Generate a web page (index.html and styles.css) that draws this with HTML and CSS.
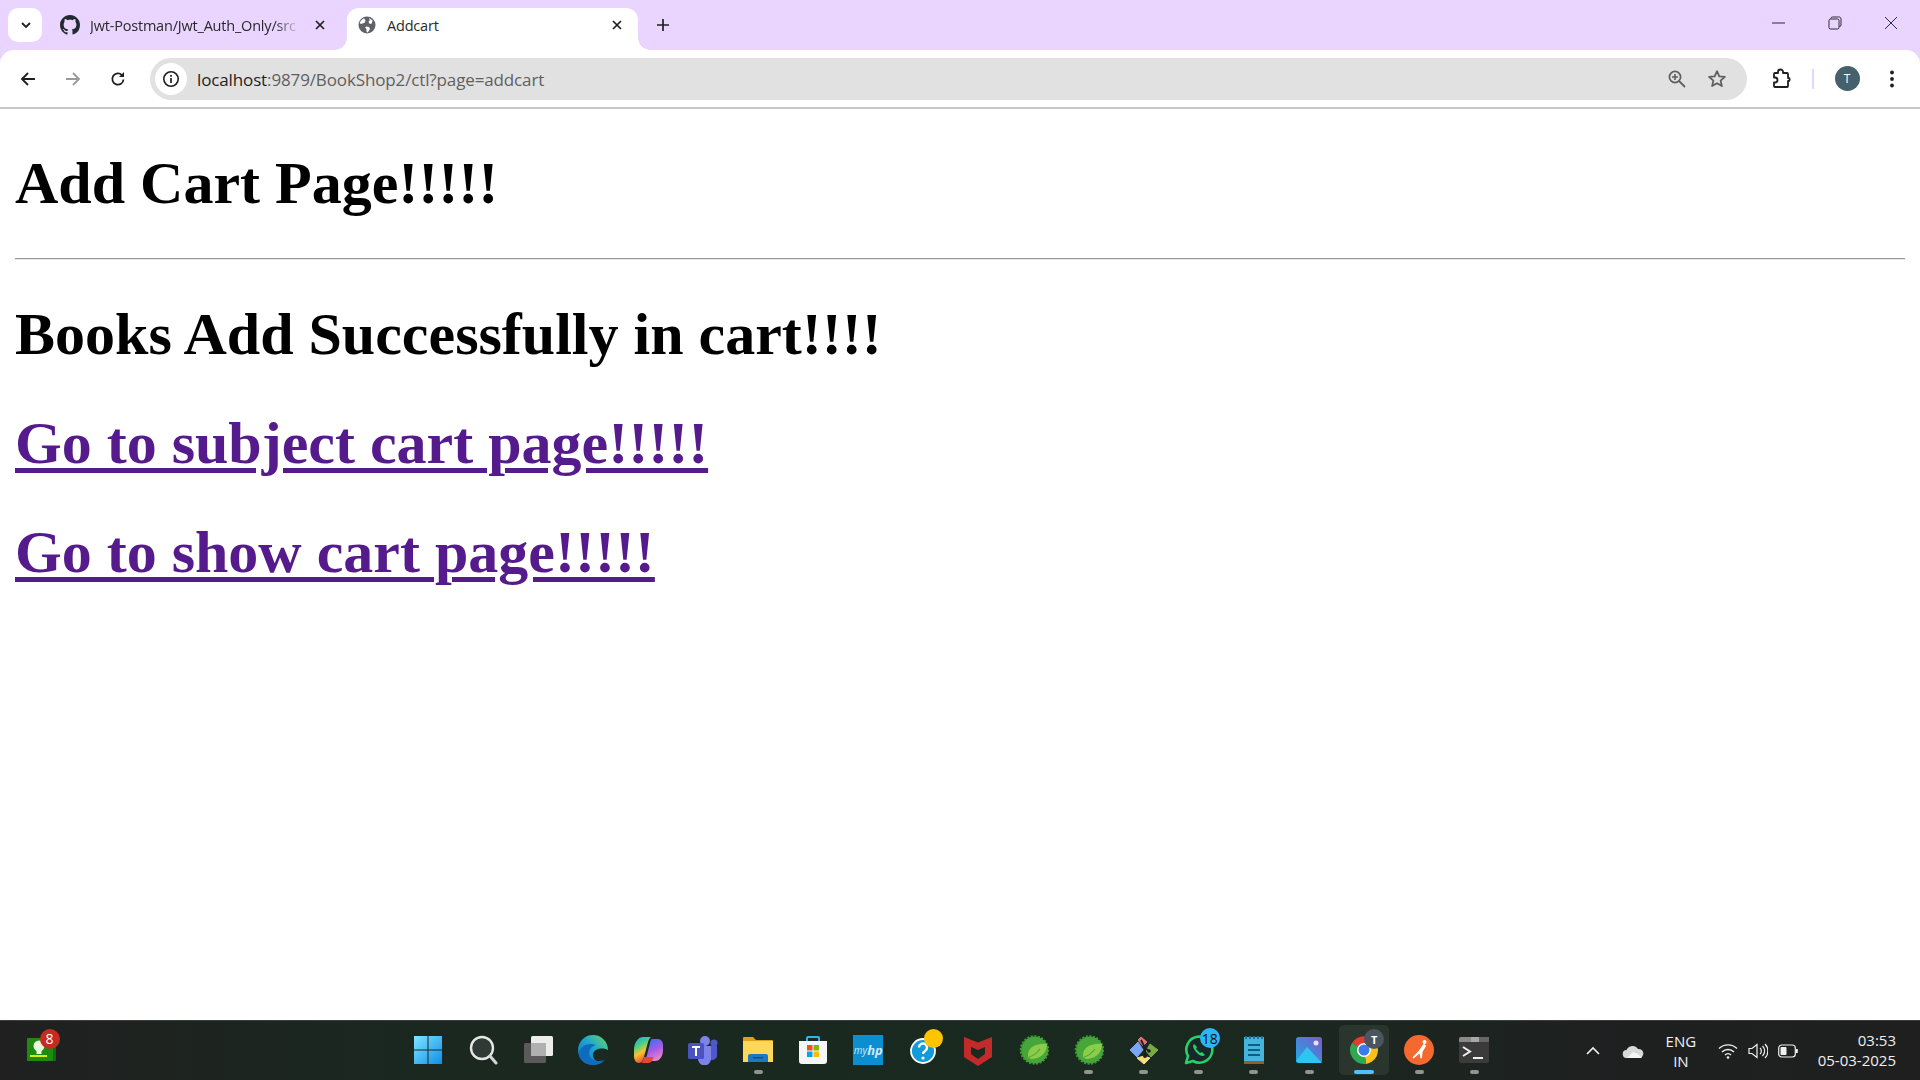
FILE: index.html
```html
<!DOCTYPE html>
<html lang="en">
<head>
<meta charset="utf-8">
<title>Addcart</title>
<link rel="stylesheet" href="styles.css">
</head>
<body>
<div class="screen">
  <header class="tabstrip">
    <button class="tabsearch"><svg width="14" height="14" viewBox="0 0 14 14"><path d="M3 5l4 4 4-4" fill="none" stroke="#1f1f1f" stroke-width="1.8"/></svg></button>
    <div class="tab inactive">
      <svg class="favicon" width="20" height="20" viewBox="0 0 16 16"><path fill="#24292f" d="M8 0C3.58 0 0 3.58 0 8c0 3.54 2.29 6.53 5.47 7.59.4.07.55-.17.55-.38 0-.19-.01-.82-.01-1.49-2.01.37-2.53-.49-2.69-.94-.09-.23-.48-.94-.82-1.13-.28-.15-.68-.52-.01-.53.63-.01 1.08.58 1.23.82.72 1.21 1.87.87 2.33.66.07-.52.28-.87.51-1.07-1.78-.2-3.64-.89-3.64-3.95 0-.87.31-1.59.82-2.15-.08-.2-.36-1.02.08-2.12 0 0 .67-.21 2.2.82.64-.18 1.32-.27 2-.27s1.36.09 2 .27c1.53-1.04 2.2-.82 2.2-.82.44 1.1.16 1.92.08 2.12.51.56.82 1.27.82 2.15 0 3.07-1.87 3.75-3.65 3.95.29.25.54.73.54 1.48 0 1.07-.01 1.93-.01 2.2 0 .21.15.46.55.38A8.01 8.01 0 0 0 16 8c0-4.42-3.58-8-8-8z"/></svg>
      <span class="tabtitle fade">Jwt-Postman/Jwt_Auth_Only/src</span>
      <svg class="tabclose" width="12" height="12" viewBox="0 0 12 12"><path d="M2 2l8 8M10 2l-8 8" stroke="#1f1f1f" stroke-width="1.7"/></svg>
    </div>
    <div class="tab active">
      <svg class="favicon" width="18" height="18" viewBox="0 0 18 18"><circle cx="9" cy="9" r="8.5" fill="#5f6368"/><path fill="#fff" d="M6 2.2l1.6 2.3-1 2.2L3 8 1.6 7a7.6 7.6 0 0 1 4.4-4.8zM8 10.5l3 .6 1 2-2.2 3.4-1.2-.6-.2-3-1.2-1.2zM11 2l3.6 2.5-.8 3-2 .4-1.4-2.2 1.4-1.2z"/></svg>
      <span class="tabtitle">Addcart</span>
      <svg class="tabclose" width="12" height="12" viewBox="0 0 12 12"><path d="M2 2l8 8M10 2l-8 8" stroke="#1f1f1f" stroke-width="1.7"/></svg>
    </div>
    <button class="newtab"><svg width="14" height="14" viewBox="0 0 14 14"><path d="M7 1v12M1 7h12" stroke="#1f1f1f" stroke-width="1.7"/></svg></button>
    <div class="winctl">
      <svg width="14" height="14" viewBox="0 0 14 14"><path d="M0 7h13" stroke="#2b2b33" stroke-width="1"/></svg>
      <svg width="14" height="14" viewBox="0 0 14 14"><path d="M3 2.500a1.500 1.500 0 0 1 1.500-1.500h6A2 2 0 0 1 13 3v6a1.500 1.500 0 0 1-1.500 1.500" fill="none" stroke="#2b2b33"/><rect x="1" y="3" width="10" height="10" rx="1.500" fill="none" stroke="#2b2b33"/></svg>
      <svg width="14" height="14" viewBox="0 0 14 14"><path d="M1 1l12 12M13 1L1 13" stroke="#2b2b33" stroke-width="1"/></svg>
    </div>
  </header>
  <nav class="toolbar">
    <svg class="navicon first" width="18" height="18" viewBox="0 0 18 18"><path d="M16 9H3M9 3L3 9l6 6" fill="none" stroke="#1f1f1f" stroke-width="1.8"/></svg>
    <svg class="navicon" width="18" height="18" viewBox="0 0 18 18"><path d="M2 9h13M9 3l6 6-6 6" fill="none" stroke="#9a9a9a" stroke-width="1.8"/></svg>
    <svg class="navicon" width="18" height="18" viewBox="0 0 18 18"><path d="M14.500 9.500a5.600 5.600 0 1 1-1.600-4.400" fill="none" stroke="#1f1f1f" stroke-width="1.8"/><path d="M15 2v5h-5z" fill="#1f1f1f"/></svg>
    <div class="omnibox">
      <span class="siteinfo"><svg width="18" height="18" viewBox="0 0 18 18"><circle cx="9" cy="9" r="7.200" fill="none" stroke="#1f1f1f" stroke-width="1.6"/><path d="M9 8v5M9 5v1.800" stroke="#1f1f1f" stroke-width="1.7"/></svg></span>
      <span class="url"><span class="host">localhost</span>:9879/BookShop2/ctl?page=addcart</span>
      <svg class="zoomglass" width="20" height="20" viewBox="0 0 20 20"><circle cx="8" cy="8" r="5.600" fill="none" stroke="#5f5f5f" stroke-width="1.7"/><path d="M12 12l6 6" stroke="#5f5f5f" stroke-width="1.8"/><path d="M8 5v6M5 8h6" stroke="#5f5f5f" stroke-width="1.6"/></svg>
      <svg class="star" width="20" height="20" viewBox="0 0 20 20"><path d="M10 2.200l2.300 5.200 5.600.5-4.300 3.700 1.300 5.500L10 14.200l-4.900 2.900 1.300-5.500-4.300-3.700 5.600-.5z" fill="none" stroke="#5f5f5f" stroke-width="1.8" stroke-linejoin="round"/></svg>
    </div>
    <svg class="ext" width="22" height="22" viewBox="0 0 22 22"><path d="M8 5V4a2.500 2.500 0 0 1 5 0v1h4a1 1 0 0 1 1 1v4h1a2 2 0 0 1 0 3h-1v5a1 1 0 0 1-1 1H5a1 1 0 0 1-1-1v-3.500h1a2.500 2.500 0 0 0 0-5H4V6a1 1 0 0 1 1-1z" fill="none" stroke="#1f1f1f" stroke-width="1.8" stroke-linejoin="round"/></svg>
    <span class="sep"></span>
    <span class="avatar">T</span>
    <svg class="menu" width="6" height="20" viewBox="0 0 6 20"><circle cx="3" cy="3.500" r="1.900" fill="#1f1f1f"/><circle cx="3" cy="10" r="1.900" fill="#1f1f1f"/><circle cx="3" cy="16.500" r="1.900" fill="#1f1f1f"/></svg>
  </nav>
  <main class="page">
    <h1>Add Cart Page!!!!!</h1>
    <hr>
    <h1>Books Add Successfully in cart!!!!</h1>
    <h1><a href="#">Go to subject cart page!!!!!</a></h1>
    <h1><a href="#">Go to show cart page!!!!!</a></h1>
  </main>
  <footer class="taskbar">
    <div class="widget">
      <svg width="29" height="23" viewBox="0 0 29 23"><rect x="0" y="0" width="26" height="23" fill="#1f8a12"/><rect x="26" y="0" width="3" height="23" fill="#0e6b14"/><circle cx="12" cy="8" r="5.500" fill="#e8f6df"/><rect x="9.500" y="12" width="5" height="4" fill="#e8f6df"/><rect x="3" y="17" width="17" height="2" fill="#d9ee10"/></svg>
      <span class="badge red">8</span>
    </div>
    <div class="apps">
      <div class="app"><svg width="30" height="30" viewBox="0 0 30 30"><defs><linearGradient id="w" x1="0" y1="0" x2="1" y2="1"><stop offset="0" stop-color="#7fe6ff"/><stop offset="1" stop-color="#0f8ee8"/></linearGradient></defs><path fill="url(#w)" d="M1 1h13.500v13.500H1zM15.500 1H29v13.500H15.500zM1 15.500h13.500V29H1zM15.500 15.500H29V29H15.500z"/></svg></div>
      <div class="app"><svg width="30" height="30" viewBox="0 0 30 30"><circle cx="14" cy="13" r="11" fill="#2f3a34" stroke="#e6e6e6" stroke-width="2.400"/><path d="M22 21l6 7" stroke="#d5d5d5" stroke-width="3" stroke-linecap="round"/></svg></div>
      <div class="app"><svg width="30" height="30" viewBox="0 0 30 30"><rect x="8" y="1" width="22" height="20" rx="1.500" fill="#ececec"/><rect x="1" y="8" width="22" height="20" rx="1.500" fill="#5a5a5a"/><rect x="8" y="8" width="15" height="13" fill="#b0b0b0"/></svg></div>
      <div class="app"><svg width="30" height="30" viewBox="0 0 30 30"><defs><linearGradient id="e" x1="0" y1="1" x2="1" y2="0"><stop offset="0" stop-color="#0d6fc4"/><stop offset=".55" stop-color="#1fa6d0"/><stop offset="1" stop-color="#6fdc5a"/></linearGradient></defs><circle cx="15" cy="15" r="15" fill="url(#e)"/><path d="M31 16c-3-3-9-3-13-1-4 2-4 7-1 10 3 2 8 3 14-1z" fill="#1a2a20"/><path d="M1 20C1 12 9 7 18 10c-4 1-7 4-7 9 1 5 7 9 16 6-3 3-7 5-12 5C8 30 2 26 1 20z" fill="#0f6bbd"/></svg></div>
      <div class="app"><svg width="30" height="30" viewBox="0 0 30 30"><defs><linearGradient id="c1" x1="0" y1="0" x2=".4" y2="1"><stop offset="0" stop-color="#2a9fe8"/><stop offset=".35" stop-color="#3fd08a"/><stop offset=".65" stop-color="#f4c430"/><stop offset="1" stop-color="#f0453c"/></linearGradient><linearGradient id="c2" x1=".3" y1="0" x2=".7" y2="1"><stop offset="0" stop-color="#3a6ff0"/><stop offset=".5" stop-color="#a95be8"/><stop offset="1" stop-color="#f48ac0"/></linearGradient></defs><path fill="url(#c2)" d="M19 4h6c3 0 5 3 5 6v5c0 6-3 11-8 11h-7c-3 0-2-3-1-6l3-12c.5-2 1-4 2-4z"/><path fill="url(#c1)" d="M10 2h9c-2 0-3 2-4 5l-4 15c-1 3-2 6-5 6-3 0-5-3-5-7v-6C1 8 5 2 10 2z"/><path fill="#e8453a" d="M11 22c-.5 2-1 4-2.500 6H15c3 0 4-2 5-5l.5-1H11z"/></svg></div>
      <div class="app"><svg width="30" height="30" viewBox="0 0 30 30"><circle cx="17" cy="6" r="5" fill="#7b83eb"/><circle cx="26" cy="8" r="3.500" fill="#5059c9"/><path d="M21 11h8v10a5 5 0 0 1-8 3z" fill="#5059c9"/><path d="M10 11h13v13a6.500 6.500 0 0 1-13 0z" fill="#7b83eb"/><rect x="0" y="8" width="16" height="16" rx="1.500" fill="#4b53bc"/><path d="M4 12h8M8 12v9" stroke="#fff" stroke-width="2"/></svg></div>
      <div class="app dot"><svg width="30" height="30" viewBox="0 0 30 30"><path d="M0 3a1 1 0 0 1 1-1h9l3 3h16a1 1 0 0 1 1 1v4H0z" fill="#e0a212"/><rect x="0" y="6" width="30" height="21" fill="#fdd75a"/><path d="M5 27v-6a2 2 0 0 1 2-2h16a2 2 0 0 1 2 2v6z" fill="#1b79c4"/><rect x="10" y="22" width="10" height="1.500" fill="#0d4f86"/></svg></div>
      <div class="app"><svg width="30" height="30" viewBox="0 0 30 30"><path d="M9 7V3a1 1 0 0 1 1-1h10a1 1 0 0 1 1 1v4" fill="none" stroke="#2bb6ee" stroke-width="2"/><path d="M1 6h28v20a3 3 0 0 1-3 3H4a3 3 0 0 1-3-3z" fill="#f6f6f6"/><rect x="9" y="10" width="5.500" height="5.500" fill="#f25022"/><rect x="15.500" y="10" width="5.500" height="5.500" fill="#7fba00"/><rect x="9" y="16.500" width="5.500" height="5.500" fill="#00a4ef"/><rect x="15.500" y="16.500" width="5.500" height="5.500" fill="#ffb900"/></svg></div>
      <div class="app"><span class="myhp">my<i>hp</i></span></div>
      <div class="app"><svg width="30" height="30" viewBox="0 0 30 30"><circle cx="15" cy="16" r="12" fill="#119bd8" stroke="#fff" stroke-width="1.800"/><path d="M11 12.500a4 4 0 1 1 6 3.500c-1.500 1-2 1.500-2 3" fill="none" stroke="#fff" stroke-width="2.400"/><circle cx="15" cy="23" r="1.600" fill="#fff"/></svg><span class="badge yellow"></span></div>
      <div class="app"><svg width="28" height="32" viewBox="0 0 28 32"><path fill="#c32a2a" fill-rule="evenodd" d="M0 3l14 5.500L28 3v20l-14 9-14-9zM7 13v7l7 5 7-5v-7l-7 3z"/></svg></div>
      <div class="app"><svg width="30" height="30" viewBox="0 0 30 30"><circle cx="15.500" cy="15" r="13.500" fill="#3f9c35" stroke="#3b9a32" stroke-width="2.500" stroke-dasharray="2 1.500"/><circle cx="16" cy="15" r="13" fill="#46a63a"/><path d="M9 22C8 13 16 8 28 9c0 10-8 15-16 15z" fill="#8ccc4a"/><path d="M10 22c4-1 8-4 11-8" fill="none" stroke="#4aa838" stroke-width="1.200"/></svg></div>
      <div class="app dot"><svg width="30" height="30" viewBox="0 0 30 30"><circle cx="15.500" cy="15" r="13.500" fill="#3f9c35" stroke="#3b9a32" stroke-width="2.500" stroke-dasharray="2 1.500"/><circle cx="16" cy="15" r="13" fill="#46a63a"/><path d="M9 22C8 13 16 8 28 9c0 10-8 15-16 15z" fill="#8ccc4a"/><path d="M10 22c4-1 8-4 11-8" fill="none" stroke="#4aa838" stroke-width="1.200"/></svg></div>
      <div class="app dot"><svg width="30" height="30" viewBox="0 0 30 30"><path d="M9 5l3-3 6 5-4 4z" fill="#e3717c" stroke="#e3717c" stroke-linejoin="round"/><path d="M21 9l8 6-7 7-5-6z" fill="#76ab46" stroke="#76ab46" stroke-linejoin="round"/><path d="M9 7l5 8-6 7-7-7z" fill="#7aa7f5" stroke="#7aa7f5" stroke-linejoin="round"/><path d="M15 21l6 2-6 6-7-6z" fill="#f2df7e" stroke="#f2df7e" stroke-linejoin="round"/><path d="M12 5l4 8v8M16 13l4 3" fill="none" stroke="#1e1e1e" stroke-width="1.800"/><circle cx="16" cy="21" r="2" fill="#1e1e1e"/><circle cx="20" cy="16" r="1.800" fill="#1e1e1e"/></svg></div>
      <div class="app dot"><svg width="30" height="30" viewBox="0 0 30 30"><path d="M2 28l2-7a13 13 0 1 1 5 5z" fill="#18272a" stroke="#25d366" stroke-width="2.600" stroke-linejoin="round"/><path d="M10 9c-2 2 0 6 3 9s6 4 8 2l-3-3-2 1-4-4 1-2z" fill="#25d366"/></svg><span class="badge blue">18</span></div>
      <div class="app dot"><svg width="24" height="30" viewBox="0 0 24 30"><rect x="2" y="2" width="20" height="26" fill="#46b5dc"/><rect x="2" y="26" width="20" height="3" fill="#9b5a2a"/><path d="M6 10h12M6 15h12M6 20h12" stroke="#0e5f87" stroke-width="2"/><path d="M4 1v3M8 1v3M12 1v3M16 1v3M20 1v3" stroke="#1a6f97" stroke-width="1.800"/></svg></div>
      <div class="app dot"><svg width="26" height="26" viewBox="0 0 26 26"><defs><linearGradient id="p" x1="0" y1="1" x2="1" y2="0"><stop offset="0" stop-color="#1fa7e8"/><stop offset="1" stop-color="#7b5bc8"/></linearGradient></defs><rect width="26" height="26" rx="2.500" fill="url(#p)"/><path d="M0 24l11-14 15 16H3z" fill="#2fc5f2"/><circle cx="20" cy="6" r="2.500" fill="#e7e2f8"/></svg></div>
      <div class="app active dotbar"><svg class="lifted" width="30" height="30" viewBox="0 0 30 30"><path d="M15 15L3 8a14 14 0 0 1 24.100 0z" fill="#e33b2e"/><path d="M15 15l12.100-7A14 14 0 0 1 17 28.900z" fill="#fbc116"/><path d="M15 15l2 13.900A14 14 0 0 1 3 8z" fill="#2fa84f"/><circle cx="15" cy="15" r="7" fill="#fff"/><circle cx="15" cy="15" r="5.500" fill="#3b7bea"/></svg><span class="badge slate">T</span></div>
      <div class="app dot"><svg width="30" height="30" viewBox="0 0 30 30"><circle cx="15" cy="15" r="15" fill="#f4692f"/><circle cx="20.500" cy="7" r="2" fill="#fff"/><path d="M19 9.500l-4 6-6.500 7 1 1 6-5 1 5 1.500-.5.500-6 3-5c1-2-.5-3.500-2.500-2.500z" fill="#fff"/></svg></div>
      <div class="app dot"><svg width="30" height="26" viewBox="0 0 30 26"><rect x="0" width="30" height="26" rx="2" fill="#3b3b3b"/><path d="M0 2a2 2 0 0 1 2-2h10v5H0z" fill="#8a8a8a"/><rect x="12" width="8" height="5" fill="#a8a8a8"/><rect x="20" width="10" height="5" fill="#666"/><path d="M4 10l7 4.500L4 19" fill="none" stroke="#f0f0f0" stroke-width="2"/><path d="M14 21h10" stroke="#f0f0f0" stroke-width="2"/></svg></div>
    </div>
    <div class="tray">
      <svg class="chev" width="16" height="10" viewBox="0 0 16 10"><path d="M2 8l6-6 6 6" fill="none" stroke="#f0f0f0" stroke-width="1.600"/></svg>
      <svg class="cloud" width="22" height="14" viewBox="0 0 22 14"><path d="M5 14a4 4 0 0 1-.5-8A6.500 6.500 0 0 1 16 5a4.500 4.500 0 0 1 1.500 9z" fill="#d8d8d8"/><path d="M5 14l6-6 5 2 4 4z" fill="#f4f4f4"/></svg>
      <div class="lang"><span>ENG</span><span>IN</span></div>
      <svg class="wifi" width="20" height="16" viewBox="0 0 20 16"><path d="M1 5.500a13 13 0 0 1 18 0M4 9a8.500 8.500 0 0 1 12 0M7 12a4 4 0 0 1 6 0" fill="none" stroke="#f0f0f0" stroke-width="1.400"/><circle cx="10" cy="14.500" r="1.300" fill="#f0f0f0"/></svg>
      <svg class="vol" width="20" height="16" viewBox="0 0 20 16"><path d="M1 5.500h3L9 1.500v13L4 10.500H1z" fill="none" stroke="#f0f0f0" stroke-width="1.200"/><path d="M12 5a4 4 0 0 1 0 6M14.500 3a7 7 0 0 1 0 10M17 1a10 10 0 0 1 0 14" fill="none" stroke="#f0f0f0" stroke-width="1.200"/></svg>
      <svg class="batt" width="20" height="14" viewBox="0 0 20 14"><rect x=".7" y="1" width="16.600" height="12" rx="3" fill="none" stroke="#f0f0f0" stroke-width="1.200"/><rect x="2.500" y="3" width="6" height="8" rx="1" fill="#f0f0f0"/><rect x="18" y="5" width="1.800" height="4" fill="#f0f0f0"/></svg>
      <div class="clock"><span>03:53</span><span>05-03-2025</span></div>
    </div>
  </footer>
</div>
</body>
</html>
```
FILE: styles.css
```css
* { box-sizing: border-box; }
html, body { margin: 0; padding: 0; width: 1920px; height: 1080px; overflow: hidden; background: #fff; }
.screen { width: 1920px; height: 1080px; display: flex; flex-direction: column; background: #e9d5ff; font-family: "Open Sans", "Noto Sans", sans-serif; }

.tabstrip { height: 50px; flex: none; display: flex; align-items: flex-end; padding-left: 8px; }
.tabsearch { width: 34px; height: 34px; margin-bottom: 8px; border: 0; padding: 0 0 0 2px; border-radius: 10px; background: #fff; display: flex; align-items: center; justify-content: center; flex: none; }
.tab { height: 42px; display: flex; align-items: center; font-size: 14.500px; color: #2a2a2a; padding-bottom: 8px; flex: none; position: relative; }
.tab.inactive { width: 305px; padding-left: 18px; padding-right: 21px; }
.tab.active { width: 291px; background: #fff; border-radius: 12px 12px 0 0; padding-left: 11px; padding-right: 15px; }
.tab.active::before, .tab.active::after { content: ""; position: absolute; bottom: 0; width: 12px; height: 12px; }
.tab.active::before { left: -12px; background: radial-gradient(circle at 0 0, #e9d5ff 11.500px, #fff 12px); }
.tab.active::after { right: -12px; background: radial-gradient(circle at 100% 0, #e9d5ff 11.500px, #fff 12px); }
.favicon { flex: none; margin-right: 10px; }
.tab.active .favicon { margin-right: 11px; }
.tabtitle { flex: 1; white-space: nowrap; overflow: hidden; letter-spacing: -.2px; }
.fade { margin-right: 14px; -webkit-mask-image: linear-gradient(90deg, #000 88%, transparent); mask-image: linear-gradient(90deg, #000 88%, transparent); }
.tabclose { flex: none; }
.newtab { width: 24px; height: 24px; margin: 0 0 13px 13px; border: 0; padding: 0; background: none; display: flex; align-items: center; justify-content: center; flex: none; position: relative; }
.winctl { margin-left: auto; align-self: flex-start; display: flex; gap: 42px; padding: 16px 22px 0 0; }

.toolbar { height: 59px; flex: none; background: #fff; border-bottom: 2px solid #c8c8c8; border-radius: 14px 14px 0 0; display: flex; align-items: center; padding: 1px 0 0 0; }
.navicon { flex: none; margin-left: 27px; }
.navicon.first { margin-left: 19px; }
.omnibox { flex: 1; height: 42px; margin-left: 23px; background: #e1e1e1; border-radius: 21px; display: flex; align-items: center; padding: 0 20px 0 5px; }
.siteinfo { width: 32px; height: 32px; border-radius: 50%; background: #fff; display: flex; align-items: center; justify-content: center; flex: none; }
.url { flex: 1; margin-left: 10px; font-size: 17px; letter-spacing: -.13px; color: #5f5f5f; white-space: nowrap; }
.host { color: #1f1f1f; }
.star { margin-left: 20px; }
.ext { margin-left: 23px; flex: none; }
.sep { width: 2px; height: 20px; background: #e9d5ff; margin: 0 20.500px 0 20px; flex: none; }
.avatar { width: 25px; height: 25px; border-radius: 50%; background: #46606c; color: #fff; font-size: 12px; display: flex; align-items: center; justify-content: center; flex: none; margin-bottom: 1px; }
.menu { margin: 0 25px 0 29.500px; flex: none; }

.page { flex: 1; min-height: 0; padding: 0 15px; background: #fff; font-family: "Liberation Serif", "Times New Roman", serif; color: #000; }
.page h1 { font-size: 60px; line-height: 69px; font-weight: 700; margin: 40px 0; }
.page hr { margin: 40px 0; border: 0; border-top: 1px solid #9a9a9a; border-bottom: 1px solid #e4e4e4; }
.page a { color: #551a8b; text-decoration: underline; text-decoration-thickness: 5px; text-underline-offset: 5px; }

.taskbar { height: 60px; flex: none; background: linear-gradient(90deg, #202020 0, #1a2820 22%, #1a2a20 60%, #1e2020 85%, #1f1f1f 100%); border-top: 1px solid #3a3d3a; display: flex; align-items: center; }
.widget { width: 400px; flex: none; padding: 0 0 3px 27px; position: relative; display: flex; }
.apps { display: flex; height: 59px; flex: none; }
.app { width: 55.100px; height: 59px; display: flex; align-items: center; justify-content: center; position: relative; padding-bottom: 2px; }
.app.dot::after, .app.dotbar::after { content: ""; position: absolute; bottom: 6px; left: 50%; width: 9px; height: 4px; margin-left: -4.500px; border-radius: 2px; background: #8f9490; }
.app.dotbar::after { width: 20px; margin-left: -10px; background: #4cc2ff; }
.app.active::before { content: ""; position: absolute; inset: 4px 2.500px 5px; background: #2a352d; border-radius: 5px; }
.lifted { position: relative; }
.badge { position: absolute; border-radius: 50%; display: flex; align-items: center; justify-content: center; color: #fff; font-size: 12px; }
.badge.red { left: 39.500px; top: -9px; width: 20px; height: 20px; background: #c42b22; font-size: 14px; }
.badge.yellow { left: 28px; top: 8px; width: 19px; height: 19px; background: #ffc400; }
.badge.blue { left: 28.500px; top: 7px; width: 20px; height: 20px; background: #2fb4f5; color: #111; font-size: 14px; }
.badge.slate { left: 27.500px; top: 8px; width: 20px; height: 20px; background: #4a5560; font-size: 11px; font-weight: 700; }
.myhp { width: 30px; height: 30px; background: #0c8fd0; color: #cfeaf7; font-size: 10px; display: flex; align-items: center; justify-content: center; font-style: italic; }
.myhp i { font-size: 13px; font-weight: 700; }

.tray { flex: 1; display: flex; align-items: center; color: #f0f0f0; padding-left: 83px; }
.chev { flex: none; }
.cloud { margin-left: 21px; flex: none; }
.lang { display: flex; flex-direction: column; align-items: center; font-size: 15px; line-height: 20px; margin-left: 20px; width: 34px; flex: none; }
.wifi { margin-left: 20px; flex: none; }
.vol { margin-left: 10px; flex: none; }
.batt { margin-left: 10px; flex: none; }
.clock { margin-left: auto; margin-right: 24px; padding-bottom: 1px; display: flex; flex-direction: column; align-items: flex-end; font-size: 15px; line-height: 20px; }
```
